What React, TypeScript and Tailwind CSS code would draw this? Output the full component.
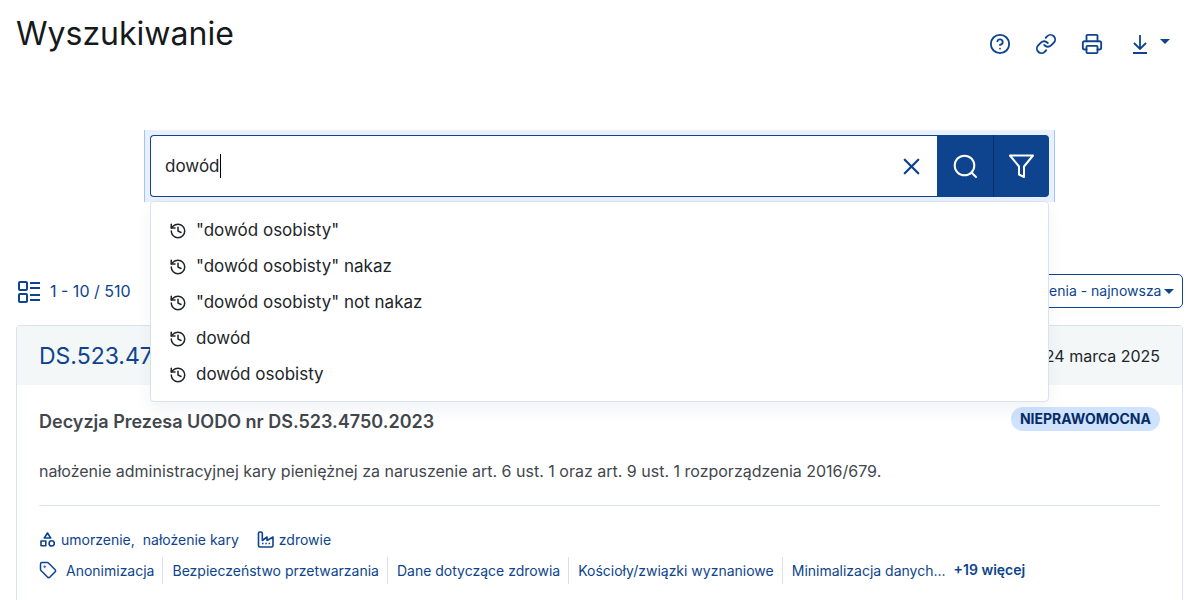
import { useState } from 'react';
import type { ReactNode } from 'react';
import { CircleHelp, History, Link as LinkIcon, Printer, Tag, X } from 'lucide-react';

const suggestions = [
  '"dowód osobisty"',
  '"dowód osobisty" nakaz',
  '"dowód osobisty" not nakaz',
  'dowód',
  'dowód osobisty',
];

const keywords = [
  'Anonimizacja',
  'Bezpieczeństwo przetwarzania',
  'Dane dotyczące zdrowia',
  'Kościoły/związki wyznaniowe',
  'Minimalizacja danych...',
];

function Caret() {
  return (
    <svg width="10" height="5" viewBox="0 0 10 5" fill="currentColor" aria-hidden="true">
      <path d="M0 0h10L5 5z" />
    </svg>
  );
}

function DownloadIcon() {
  return (
    <svg width="16" height="20" viewBox="0 0 16 20" fill="none" stroke="currentColor" strokeWidth="1.8" aria-hidden="true">
      <path d="M8 1v14M2 9l6 6 6-6M1 19h14" />
    </svg>
  );
}

function SearchIcon() {
  return (
    <svg width="26" height="26" viewBox="0 0 26 26" fill="none" stroke="currentColor" strokeWidth="2" strokeLinecap="round" aria-hidden="true">
      <circle cx="12.5" cy="12.5" r="9.8" />
      <path d="M19.5 19.5l4.5 4.5" />
    </svg>
  );
}

function FilterIcon() {
  return (
    <svg width="26" height="26" viewBox="0 0 26 26" fill="none" stroke="currentColor" strokeWidth="2" strokeLinejoin="round" aria-hidden="true">
      <path d="M1 2.500h23L15 13.500v10.500l-5-2.500v-8z" />
    </svg>
  );
}

function ListIcon() {
  return (
    <svg width="24" height="24" viewBox="0 0 24 24" fill="none" stroke="currentColor" strokeWidth="2" strokeLinejoin="round" aria-hidden="true">
      <rect x="3" y="3" width="8" height="8" rx="1" />
      <rect x="3" y="15" width="8" height="8" rx="1" />
      <path d="M14 4h10M14 9h10M14 16h10M14 21h10" />
    </svg>
  );
}

function CategoryIcon() {
  return (
    <svg width="16" height="16" viewBox="0 0 16 16" fill="none" stroke="currentColor" strokeWidth="1.6" strokeLinejoin="round" aria-hidden="true">
      <path d="M8.500 1L11.700 6h-6.400z" />
      <rect x="2" y="9" width="4.800" height="4.800" />
      <circle cx="12.700" cy="11.400" r="2.600" />
    </svg>
  );
}

function FactoryIcon() {
  return (
    <svg width="18" height="18" viewBox="0 0 18 18" fill="none" stroke="currentColor" strokeWidth="1.6" strokeLinejoin="round" aria-hidden="true">
      <path d="M1.500 2.300q0-1.300 1.300-1.300h1.200q1.300 0 1.300 1.300V9.500l4.700-3.500v3.500l6-3.500v8.500q0 1.500-1.500 1.500H3q-1.500 0-1.500-1.500z" />
      <path d="M5 12.500h1.500M8.300 12.500h1.500M11.600 12.500h1.500" />
    </svg>
  );
}

function ToolLink({ label, children }: { label: string; children: ReactNode }) {
  return (
    <a href="#" aria-label={label} className="flex h-6 w-6 items-center justify-center">
      {children}
    </a>
  );
}

export default function App() {
  const [query, setQuery] = useState('dowód');

  return (
    <main className="min-h-screen overflow-x-hidden bg-white pt-2 pr-[17px] pl-4 font-['Inter',sans-serif] text-[#212529]">
      {/* Page header */}
      <header className="flex items-start justify-between">
        <h1 className="text-[32px] leading-[52px] text-[#16191c]">Wyszukiwanie</h1>
        <nav aria-label="Narzędzia" className="flex h-[50px] items-center gap-[22px] pt-[22px] pr-[13px] text-[#0d448d]">
          <ToolLink label="Pomoc">
            <CircleHelp size={22} strokeWidth={2} />
          </ToolLink>
          <ToolLink label="Kopiuj link">
            <LinkIcon size={22} strokeWidth={2} />
          </ToolLink>
          <ToolLink label="Drukuj">
            <Printer size={22} strokeWidth={2} />
          </ToolLink>
          <button type="button" aria-label="Pobierz" className="flex h-6 items-center gap-3 pl-[6px]">
            <DownloadIcon />
            <span className="pb-[5px]">
              <Caret />
            </span>
          </button>
        </nav>
      </header>

      {/* Search */}
      <form className="relative mx-auto mt-[70px] max-w-[911px] border-x border-[#9ec5fe] bg-[#e7f0fc] px-[5px] py-[5px]" onSubmit={(e) => e.preventDefault()}>
        <div className="flex h-[62px]">
          <div className="flex flex-1 items-center rounded-l-sm border border-r-0 border-[#0d448d] bg-white pr-3 pl-[14px]">
            <input
              aria-label="Szukaj"
              value={query}
              onChange={(e) => setQuery(e.target.value)}
              className="field-sizing-content bg-transparent text-[17px] leading-6 caret-transparent outline-none"
            />
            <span className="h-6 w-px bg-black" />
            <button type="button" aria-label="Wyczyść" onClick={() => setQuery('')} className="ml-auto text-[#0d448d]">
              <X size={27} strokeWidth={2} />
            </button>
          </div>
          <button type="submit" aria-label="Szukaj" className="flex w-14 items-center justify-center bg-[#0d448d] text-white">
            <SearchIcon />
          </button>
          <button type="button" aria-label="Filtry" className="flex w-14 items-center justify-center rounded-r-sm border-l border-[#08306a] bg-[#0d448d] text-white">
            <FilterIcon />
          </button>
        </div>

        {/* Recent queries */}
        <ul className="absolute inset-x-[5px] top-[71px] z-10 rounded-sm border border-[#dbe2ef] bg-white pt-[11px] pb-2 shadow-[0_8px_16px_rgba(33,56,110,0.06)]">
          {suggestions.map((item) => (
            <li key={item}>
              <button type="button" onClick={() => setQuery(item)} className="flex h-9 w-full items-center gap-[9px] px-[18px] text-left text-[17px]">
                <History size={18} strokeWidth={2} />
                {item}
              </button>
            </li>
          ))}
        </ul>
      </form>

      {/* Result count and sorting */}
      <div className="mt-[72px] flex h-[34px] items-center justify-between text-[#0d448d]">
        <div className="flex items-center gap-[10px] text-base">
          <ListIcon />
          <span>1 - 10 / 510</span>
        </div>
        <label className="relative flex items-center">
          <select aria-label="Sortowanie" className="h-[34px] appearance-none rounded-[5px] border border-[#0d448d] bg-white pr-5 pl-3 text-sm">
            <option>Data ogłoszenia - najnowsza</option>
          </select>
          <span className="pointer-events-none absolute right-[9px]">
            <Caret />
          </span>
        </label>
      </div>

      {/* Result */}
      <article className="mt-[17px] rounded-t-sm border border-b-0 border-[#dbe2ef] pb-8">
        <div className="flex h-[59px] items-center justify-between bg-[#f3f7f8] px-[22px] pt-px">
          <a href="#" className="text-[23px] leading-8 text-[#0d448d]">DS.523.4750.2023</a>
          <time dateTime="2025-03-24" className="text-base">24 marca 2025</time>
        </div>
        <div className="px-[22px] pt-[22px]">
          <div className="flex items-start justify-between">
            <h2 className="text-lg leading-[30px] font-semibold text-[#42474d]">Decyzja Prezesa UODO nr DS.523.4750.2023</h2>
            <span className="rounded-full bg-[#cfe2ff] px-[9px] text-sm leading-6 font-bold text-[#052c65]">NIEPRAWOMOCNA</span>
          </div>
          <p className="border-b border-[#dbe2ef] pt-[22px] pb-[22px] text-base leading-6 text-[#42474d]">
            nałożenie administracyjnej kary pieniężnej za naruszenie art. 6 ust. 1 oraz art. 9 ust. 1 rozporządzenia 2016/679.
          </p>
          <div className="mt-[22px] flex h-6 items-center text-sm text-[#0d448d]">
            <CategoryIcon />
            <a href="#" className="ml-[6px]">umorzenie,</a>
            <a href="#" className="mr-[18px] ml-2">nałożenie kary</a>
            <FactoryIcon />
            <a href="#" className="ml-1">zdrowie</a>
          </div>
          <div className="mt-[2px] flex h-8 items-center text-sm text-[#0d448d]">
            <Tag size={18} strokeWidth={2} />
            <ul className="flex divide-x divide-[#dbdfe8]">
              {keywords.map((keyword) => (
                <li key={keyword} className="pr-2 pl-[9px] leading-[27px]">
                  <a href="#">{keyword}</a>
                </li>
              ))}
            </ul>
            <a href="#" className="font-semibold">+19 więcej</a>
          </div>
        </div>
      </article>
    </main>
  );
}
